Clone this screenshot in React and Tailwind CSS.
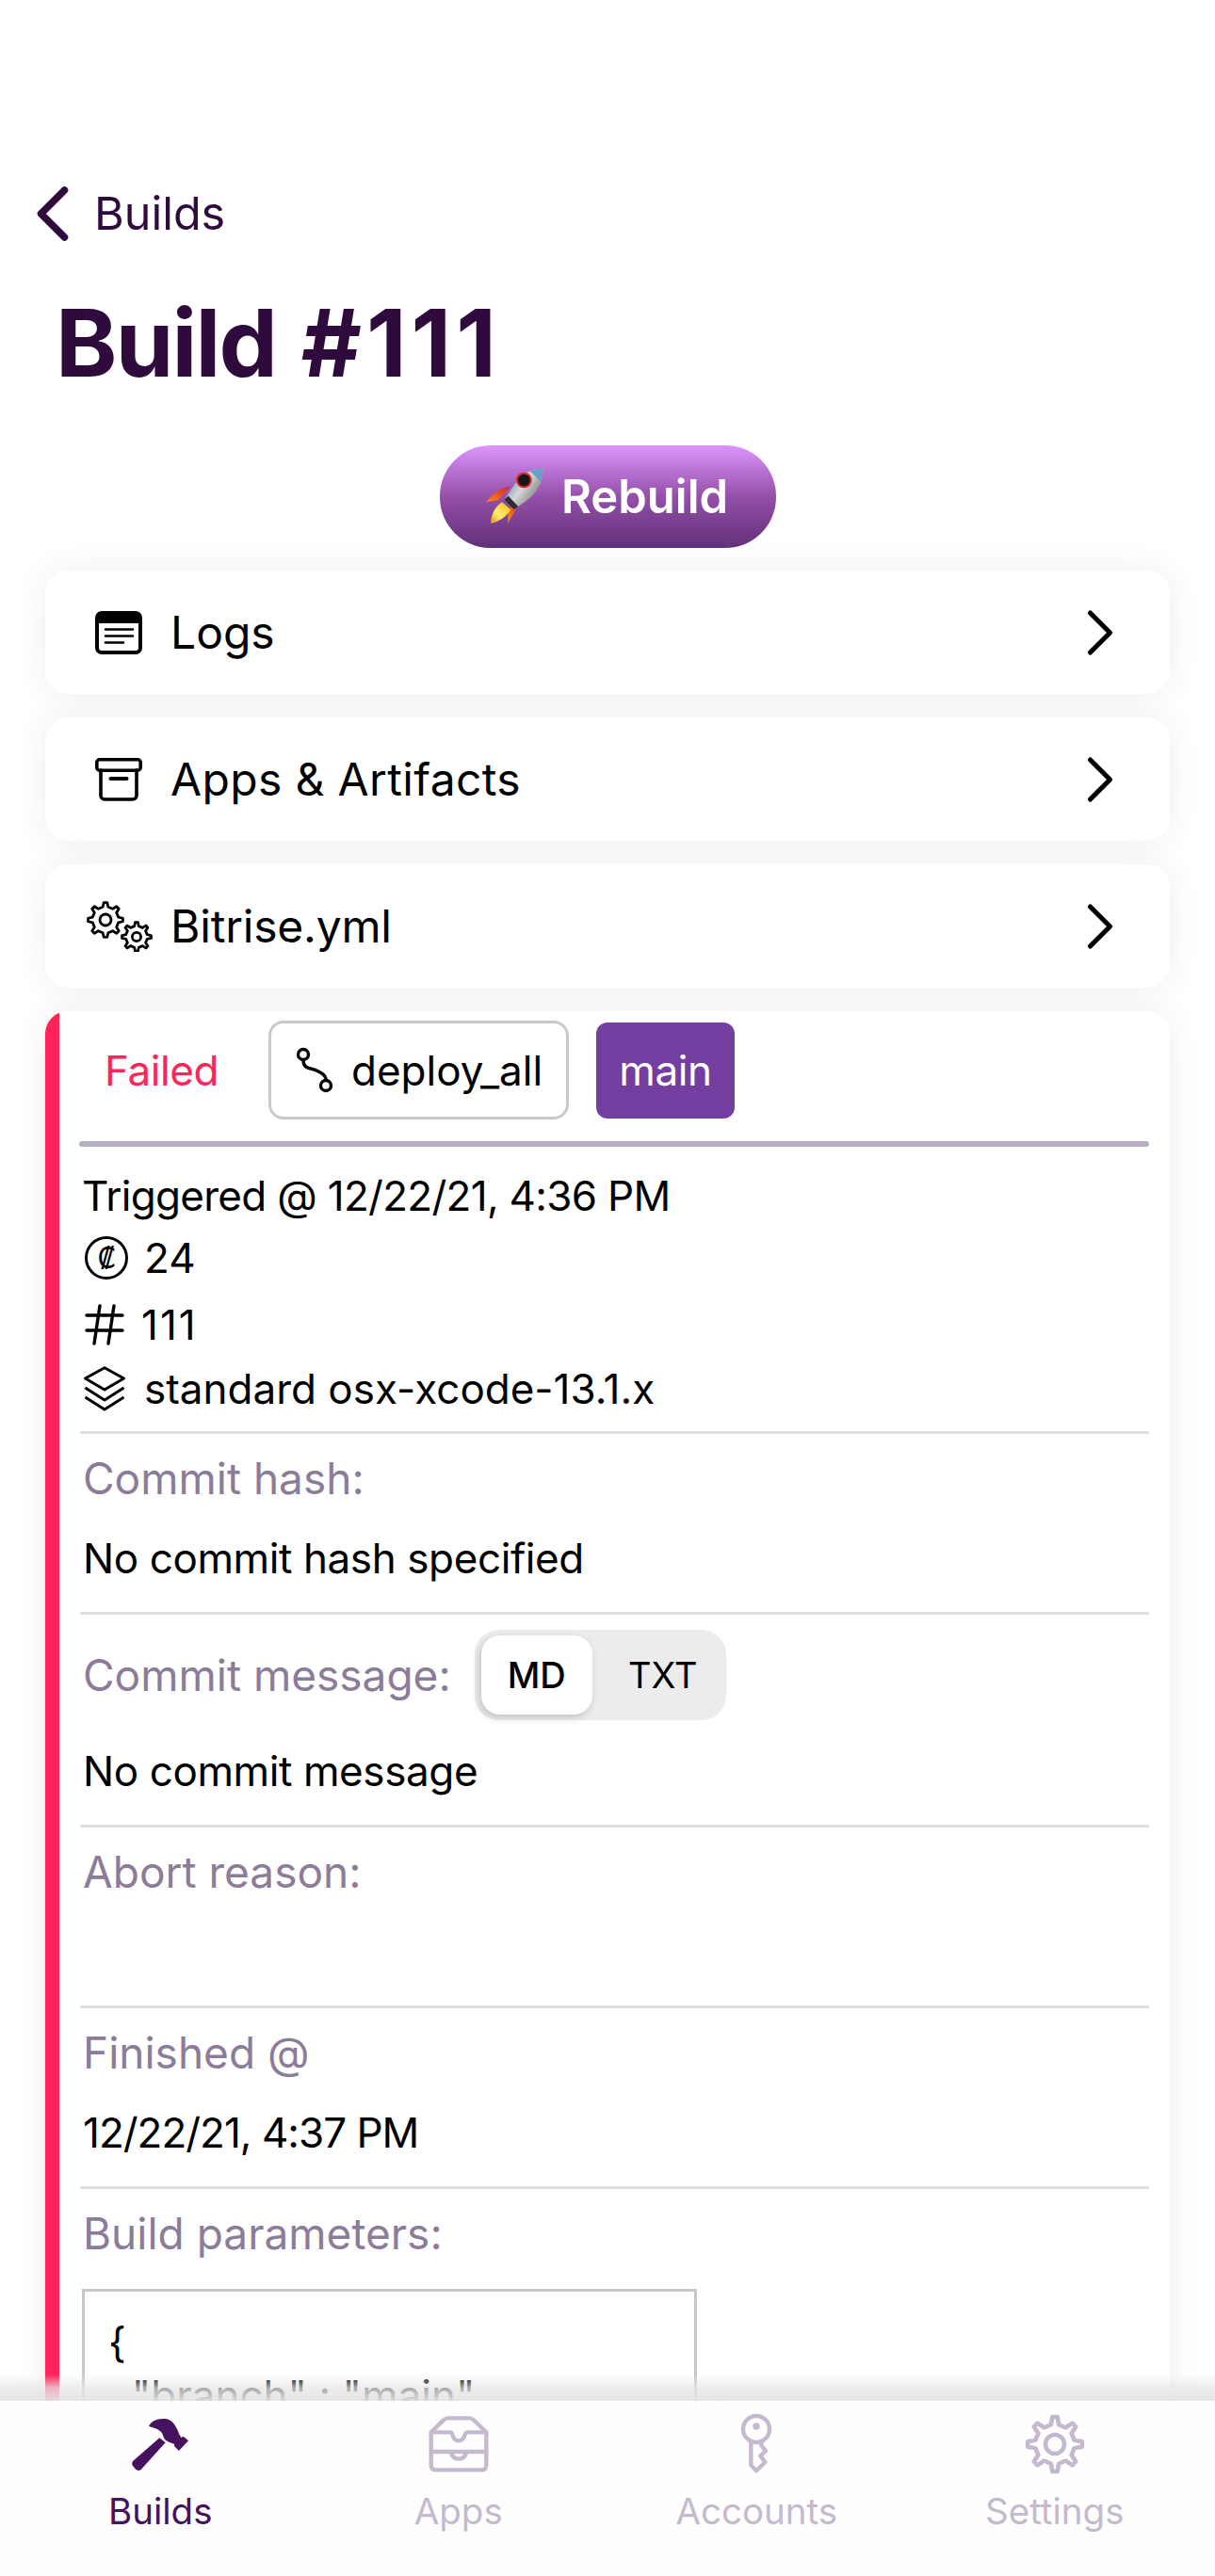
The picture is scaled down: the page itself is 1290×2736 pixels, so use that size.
import React from 'react';
import { ChevronLeft, ChevronRight } from 'lucide-react';

const gearPath = (cx, cy, rOut, rIn, teeth) => {
    const pts = [];
    const step = (Math.PI * 2) / teeth;
    for (let i = 0; i < teeth; i++) {
        const a = i * step - Math.PI / 2;
        const w = step * 0.2;
        pts.push([a - w * 1.3, rIn], [a - w * 0.6, rOut], [a + w * 0.6, rOut], [a + w * 1.3, rIn]);
    }
    return pts
        .map(([a, r], i) => `${i ? 'L' : 'M'}${(cx + Math.cos(a) * r).toFixed(2)} ${(cy + Math.sin(a) * r).toFixed(2)}`)
        .join(' ') + ' Z';
};

const LogsIcon = () => (
    <svg width="50" height="46" viewBox="0 0 50 46" fill="none" stroke="#000" strokeLinecap="round">
        <rect x="2" y="2" width="46" height="42" rx="5" strokeWidth="4" />
        <path d="M2 7a5 5 0 0 1 5-5h36a5 5 0 0 1 5 5v6H2z" fill="#000" strokeWidth="0" />
        <path d="M11 19.5h29M11 26.5h29M11 33.5h19" strokeWidth="2.6" />
    </svg>
);

const BoxIcon = () => (
    <svg width="50" height="46" viewBox="0 0 50 46" fill="none" stroke="#000" strokeWidth="3.6" strokeLinecap="round">
        <rect x="1.8" y="1.8" width="46.4" height="11.4" rx="3" />
        <path d="M6 13v27a4 4 0 0 0 4 4h30a4 4 0 0 0 4-4V13" />
        <path d="M16.5 22h17" strokeWidth="4" />
    </svg>
);

const GearsIcon = () => (
    <svg width="70" height="54" viewBox="0 0 70 54" fill="none" stroke="#000" strokeWidth="2.8" strokeLinejoin="round" className="-mr-[11px]">
        <path d={gearPath(20, 20, 18.5, 14, 8)} />
        <circle cx="20" cy="20" r="6" />
        <path d={gearPath(53, 38, 15.5, 11.5, 8)} />
        <circle cx="53" cy="38" r="4.6" />
    </svg>
);

const BranchIcon = () => (
    <svg width="40" height="50" viewBox="0 0 40 50" fill="none" stroke="#000" strokeWidth="3.4" strokeLinecap="round">
        <circle cx="8" cy="8" r="5.5" />
        <circle cx="32" cy="41" r="5.5" />
        <path d="M8 14c0 10 8 8 14 11s10 5 10 10" />
    </svg>
);

const HashIcon = () => (
    <svg width="42" height="44" viewBox="0 0 42 44" fill="none" stroke="#000" strokeWidth="3.4" strokeLinecap="round" className="ml-[3px]">
        <path d="M2 12h38M2 28h38M16 2l-6 40M31 2l-6 40" />
    </svg>
);

const StackIcon = () => (
    <svg width="44" height="48" viewBox="0 0 44 48" fill="none" stroke="#000" strokeWidth="3" strokeLinejoin="round" className="ml-[2px]">
        <path d="M22 1.8 42.5 13 22 25 1.5 13z" />
        <path d="M1.5 23 22 36l20.5-13M1.5 33 22 46l20.5-13" />
    </svg>
);

const Rocket = () => (
    <svg width="80" height="80" viewBox="0 0 240 240">
        <defs>
            <linearGradient id="body" x1="0.1" y1="0.2" x2="0.9" y2="0.8">
                <stop offset="0" stopColor="#5f87b5" />
                <stop offset="0.45" stopColor="#d8d8d8" />
                <stop offset="1" stopColor="#6c6c72" />
            </linearGradient>
            <linearGradient id="fin" x1="1" y1="0" x2="0" y2="1">
                <stop offset="0" stopColor="#d81f1f" />
                <stop offset="1" stopColor="#ff8a1c" />
            </linearGradient>
            <linearGradient id="flame" x1="1" y1="0" x2="0" y2="1">
                <stop offset="0" stopColor="#f5b81e" />
                <stop offset="0.6" stopColor="#fff06a" />
                <stop offset="1" stopColor="#f08a1e" />
            </linearGradient>
        </defs>
        <path d="M104 86C80 90 50 104 28 136l38-6 14-16z" fill="url(#fin)" />
        <path d="M134 116l-4 30-34 58 2-40 16-24z" fill="url(#fin)" />
        <path d="M78 136c-20 12-36 40-36 68 26-4 50-22 64-44z" fill="url(#flame)" />
        <path d="M208 30c-38-6-78 24-102 68L84 128l32 32 34-24c38-26 62-66 58-106z" fill="url(#body)" />
        <path d="M208 30c-14-2-28 0-40 8 10 8 24 22 32 34 8-14 10-28 8-42z" fill="#6f9bc8" />
        <path d="M84 128l32 32 14-10-32-34z" fill="#2d2d33" />
        <circle cx="148" cy="66" r="25" fill="#d8261f" />
        <circle cx="148" cy="66" r="19" fill="#17171b" />
    </svg>
);

const HammerIcon = () => (
    <svg width="100" height="80" viewBox="0 0 300 240" fill="#46125f">
        <path d="M114 66c8-18 28-26 52-24 24 2 36 24 46 52l6 8 6-4 16 14-30 32-15-15 1-6c-6-2-20-6-30-14-6-6-6-16-12-24-8-10-24-14-40-19z" />
        <path d="M148 103l19 15-78 86c-6 5-12 4-18-2l-8-10c-4-6-3-11 1-16z" />
    </svg>
);

const AppsIcon = () => (
    <svg width="100" height="80" viewBox="-10 0 300 240" fill="none" stroke="#c5b9cf" strokeWidth="13" strokeLinejoin="round" strokeLinecap="round">
        <path d="M52 85 92 46q6-6 14-6h68q8 0 14 6l40 39v105q0 15-15 15H67q-15 0-15-15z" />
        <path d="M52 85h60q6 0 8 7 5 20 20 20t20-20q2-7 8-7h60" />
        <path d="M52 147h176M115 147q5 23 25 23t25-23" />
    </svg>
);

const KeyIcon = () => (
    <svg width="100" height="80" viewBox="-20 0 300 240" fill="none" stroke="#c5b9cf" strokeWidth="13" strokeLinejoin="round">
        <circle cx="130" cy="75" r="42" />
        <circle cx="130" cy="66" r="11" fill="#c5b9cf" stroke="none" />
        <path d="M113 115v75l17 18 28-28-15-20 17-15-15-20 3-11" />
    </svg>
);

const SettingsIcon = () => (
    <svg width="100" height="80" viewBox="0 0 100 80" fill="none" stroke="#c5b9cf" strokeWidth="4.6" strokeLinejoin="round">
        <path d={gearPath(50, 41, 29, 21, 8)} />
        <circle cx="50" cy="41" r="10" />
    </svg>
);

const Row = ({ icon, label, textClass = '' }) => (
    <div className="h-[131px] rounded-[24px] bg-white shadow-[0_0_36px_rgba(0,0,0,0.07)] flex items-center">
        <div className="w-[135px] flex items-center justify-end pr-[32px] shrink-0">{icon}</div>
        <span className={`-ml-[2px] text-[48px] text-black flex-1 ${textClass}`}>{label}</span>
        <ChevronRight size={84} strokeWidth={1.45} color="#000" className="mr-[32px]" />
    </div>
);

const Section = ({ label, value }) => (
    <div className="h-[192px] border-t-[3px] border-[#e0e0e0] pl-[3px]">
        <div className="h-[94px] flex items-center text-[46px] text-[#8b7c99]">{label}</div>
        <div className="h-[76px] flex items-center text-[44px] tracking-[-0.4px] text-black">{value}</div>
    </div>
);

const Tab = ({ icon, label, active }) => (
    <div className="flex flex-col items-center">
        {icon}
        <span className={`mt-[9px] h-[46px] leading-[46px] text-[38.5px] ${active ? 'text-[#46125f]' : 'text-[#c5b9cf]'}`}>{label}</span>
    </div>
);

export default function App() {
    return (
        <div className="relative w-[1290px] h-[2736px] flex flex-col bg-white overflow-hidden font-['Inter',sans-serif]">
            <div className="flex-1 min-h-0 overflow-hidden">
                <div className="h-[197px]" />
                <div className="h-[60px] flex items-center text-[#2f0a3d]">
                    <ChevronLeft size={100} strokeWidth={1.8} className="ml-[6px] -mr-[6px]" />
                    <span className="text-[48.5px]">Builds</span>
                </div>
                <h1 className="mt-[47px] ml-[59px] h-[120px] leading-[120px] text-[99px] font-bold text-[#2f0a3d]">
                    <span className="tracking-[-1.8px]">Build</span>{' '}
                    <span className="ml-[3px] tracking-[5px]">#111</span>
                </h1>
                <button className="mt-[49px] mx-auto w-[357px] h-[109px] pr-[10px] rounded-[54px] bg-linear-to-b from-[#de94ff] via-[#9450a8] to-[#62307a] flex items-center justify-center text-white text-[49px] font-semibold">
                    <Rocket />
                    <span className="ml-[9px]">Rebuild</span>
                </button>

                <div className="mt-[24px] mx-[48px] flex flex-col gap-[25px]">
                    <Row icon={<LogsIcon />} label="Logs" />
                    <Row icon={<BoxIcon />} label="Apps & Artifacts" textClass="tracking-[0.35px]" />
                    <Row icon={<GearsIcon />} label="Bitrise.yml" textClass="tracking-[-0.2px]" />

                    <div className="rounded-[24px] bg-white shadow-[0_0_36px_rgba(0,0,0,0.07)] overflow-hidden flex h-[1600px]">
                        <div className="w-[15px] shrink-0 bg-[#ff2459]" />
                        <div className="flex-1 pl-[21px] pr-[22px] pt-[10px]">
                            <div className="flex items-center pl-[27px] text-[44px] tracking-[-0.4px]">
                                <span className="w-[174px] text-[#ff2459]">Failed</span>
                                <div className="w-[319px] h-[105px] rounded-[16px] border-[3px] border-[#c9c9c9] flex items-center pl-[26px] text-black">
                                    <BranchIcon />
                                    <span className="ml-[19px] tracking-normal">deploy_all</span>
                                </div>
                                <div className="ml-[29px] w-[147px] h-[102px] rounded-[12px] bg-[#743da0] flex items-center justify-center text-white">main</div>
                            </div>
                            <div className="mt-[23px] h-[6px] rounded-full bg-[#b8aec3]" />

                            <div className="mt-[22px] pl-[3px] text-[44px] text-black">
                                <div className="h-[60px] flex items-center tracking-[-0.7px]">Triggered @ 12/22/21, 4:36 PM</div>
                                <div className="h-[72px] flex items-center">
                                    <span className="ml-[3px] w-[46px] h-[46px] rounded-full border-[3px] border-black flex items-center justify-center text-[30px] font-['DejaVu_Sans',sans-serif]">₡</span>
                                    <span className="ml-[17px]">24</span>
                                </div>
                                <div className="h-[70px] flex items-center">
                                    <HashIcon />
                                    <span className="ml-[18px] tracking-[2px]">111</span>
                                </div>
                                <div className="h-[66px] flex items-center">
                                    <StackIcon />
                                    <span className="ml-[20px]">standard osx-xcode-13.1.x</span>
                                </div>
                            </div>

                            <div className="mt-[12px] pl-[1px]">
                                <Section label="Commit hash:" value="No commit hash specified" />

                                <div className="h-[226px] border-t-[3px] border-[#e0e0e0] pl-[3px]">
                                    <div className="pt-[16px] flex items-center">
                                        <span className="text-[46px] text-[#8b7c99]">Commit message:</span>
                                        <div className="ml-[25px] w-[267px] h-[96px] rounded-[26px] bg-[#ececec] flex items-center pl-[7px] text-[38px] font-medium text-black">
                                            <div className="w-[118px] h-[84px] rounded-[20px] bg-white shadow-[-2px_3px_8px_rgba(0,0,0,0.18)] flex items-center justify-center">MD</div>
                                            <div className="flex-1 flex items-center justify-center pl-[8px] font-normal">TXT</div>
                                        </div>
                                    </div>
                                    <div className="h-[108px] flex items-center text-[44px] tracking-[-0.4px] text-black">No commit message</div>
                                </div>

                                <Section label="Abort reason:" value="" />
                                <div className="h-[192px] border-t-[3px] border-[#e0e0e0] pl-[3px]">
                                    <div className="h-[94px] flex items-center text-[46px] text-[#8b7c99]">Finished @</div>
                                    <div className="h-[76px] flex items-center text-[44px] tracking-[-1px] text-black">12/22/21, 4:37 PM</div>
                                </div>

                                <div className="border-t-[3px] border-[#e0e0e0] pl-[2px]">
                                    <div className="h-[94px] flex items-center pl-[1px] text-[46px] text-[#8b7c99]">Build parameters:</div>
                                    <div className="mt-[12px] w-[653px] h-[300px] border-[3px] border-[#c8c8c8] pl-[25px] pt-[26px] text-[44px] leading-[56px] text-black whitespace-pre">
                                        <div>{'{'}</div>
                                        <div>{'  "branch" : "main"'}</div>
                                    </div>
                                </div>
                            </div>
                        </div>
                    </div>
                </div>
            </div>

            <div className="relative h-[186px] shrink-0 bg-[#fefefe] px-[12px] pt-[5px] grid grid-cols-4">
                <div className="absolute left-0 right-0 -top-[28px] h-[28px] bg-linear-to-b from-[#e4e4e400] via-[#e6e6e6bb] to-[#e4e4e4f2]" />
                <Tab icon={<HammerIcon />} label="Builds" active />
                <Tab icon={<AppsIcon />} label="Apps" />
                <Tab icon={<KeyIcon />} label="Accounts" />
                <Tab icon={<SettingsIcon />} label="Settings" />
            </div>
        </div>
    );
}
